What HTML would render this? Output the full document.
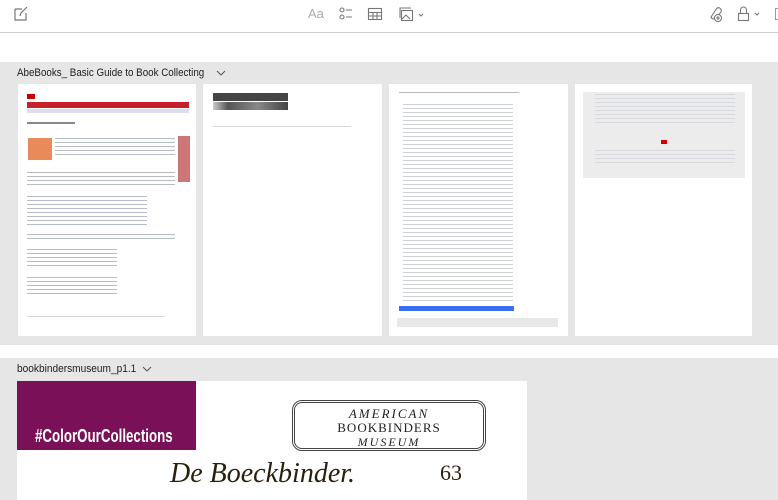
<!DOCTYPE html>
<html><head><meta charset="utf-8"><style>
*{margin:0;padding:0;box-sizing:border-box}
body{width:778px;height:500px;overflow:hidden;background:#fff;font-family:"Liberation Sans",sans-serif;position:relative}
.a{position:absolute}
.pg{position:absolute;top:84px;height:252px;background:#fff}
.ln{position:absolute;height:1px;background:#d8d8de}
.t{position:absolute;background:repeating-linear-gradient(#b8bcc8 0 1px,transparent 1px 4px)}
.cond{transform-origin:0 0;white-space:nowrap}
</style></head><body>
<div class="a" style="left:0;top:32px;width:778px;height:1px;background:#d0d0d0"></div>
<svg class="a" style="left:13px;top:6px" width="16" height="16" viewBox="0 0 16 16" fill="none" stroke="#777" stroke-width="1.2"><path d="M2 3h7M2 3v11h11V7"/><path d="M7 10l1-3 6-6"/></svg>
<div class="a" style="left:308px;top:6px;font-size:13px;color:#aaa">Aa</div>
<svg class="a" style="left:338px;top:6px" width="16" height="16" viewBox="0 0 16 16" fill="none" stroke="#777" stroke-width="1.1"><circle cx="4" cy="4" r="2"/><circle cx="4" cy="11" r="2"/><path d="M8 4h6M8 11h6"/></svg>
<svg class="a" style="left:367px;top:6px" width="16" height="16" viewBox="0 0 16 16" fill="none" stroke="#777" stroke-width="1.1"><rect x="1.5" y="2.5" width="13" height="11"/><path d="M1.5 6.5h13M1.5 10h13M6 6.5v7M10 6.5v7"/></svg>
<svg class="a" style="left:399px;top:6px" width="28" height="16" viewBox="0 0 28 16" fill="none" stroke="#777" stroke-width="1.1"><rect x="2.5" y="4.5" width="11" height="10"/><path d="M1 12V2h11"/><path d="M3 13l4-4 4 4"/><path d="M20 8l2 2 2-2"/></svg>
<svg class="a" style="left:706px;top:5px" width="18" height="18" viewBox="0 0 18 18" fill="none" stroke="#777" stroke-width="1.1"><path d="M5 12L11 3a3 3 0 0 1 4 4l-5 6a3 3 0 0 1-5-1z"/><circle cx="12" cy="13" r="3.5" fill="#fff"/><path d="M12 11v4M10 13h4"/></svg>
<svg class="a" style="left:736px;top:5px" width="28" height="18" viewBox="0 0 28 18" fill="none" stroke="#777" stroke-width="1.1"><rect x="2.5" y="8.5" width="10" height="7"/><path d="M4.5 8.5V5a3 3 0 0 1 6 0v3.5"/><path d="M19 8l2 2 2-2"/></svg>
<div class="a" style="left:775px;top:8px;width:3px;height:12px;border:1px solid #999;border-right:none"></div>

<div class="a" style="left:0;top:62px;width:778px;height:283px;background:#e6e6e6"></div>
<div class="a cond" style="left:17px;top:67px;font-size:11px;color:#222;transform:scaleX(0.89)">AbeBooks_ Basic Guide to Book Collecting</div>
<svg class="a" style="left:216px;top:70px" width="10" height="7" viewBox="0 0 10 7" fill="none" stroke="#555"><path d="M1 1l4 4 4-4"/></svg>
<div class="pg" style="left:18px;width:178px">
 <div class="a" style="left:9px;top:10px;width:8px;height:5px;background:#c00"></div>
 <div class="a" style="left:9px;top:18px;width:162px;height:6px;background:#c8202a"></div>
 <div class="a" style="left:9px;top:25px;width:162px;height:4px;background:#dde"></div>
 <div class="a" style="left:9px;top:38px;width:48px;height:2px;background:#888"></div>
 <div class="a" style="left:10px;top:54px;width:24px;height:22px;background:#e88a5a"></div>
 <div class="a" style="left:160px;top:52px;width:12px;height:46px;background:#c77"></div>
 <div class="t" style="left:37px;top:54px;width:120px;height:20px"></div>
 <div class="t" style="left:9px;top:88px;width:148px;height:16px"></div>
 <div class="t" style="left:9px;top:112px;width:120px;height:30px"></div>
 <div class="t" style="left:9px;top:150px;width:148px;height:8px"></div>
 <div class="t" style="left:9px;top:165px;width:90px;height:20px"></div>
 <div class="t" style="left:9px;top:193px;width:90px;height:20px"></div>
 <div class="ln" style="left:9px;top:232px;width:138px"></div>
</div>
<div class="pg" style="left:203px;width:179px">
 <div class="a" style="left:10px;top:9px;width:75px;height:8px;background:#444"></div>
 <div class="a" style="left:10px;top:18px;width:75px;height:8px;background:linear-gradient(90deg,#ccc,#555 20%,#888,#444)"></div>
 <div class="ln" style="left:10px;top:42px;width:138px"></div>
</div>
<div class="pg" style="left:389px;width:179px">
 <div class="t" style="left:10px;top:8px;width:120px;height:3px"></div>
 <div class="t" style="left:14px;top:20px;width:110px;height:198px;opacity:.7"></div>
 <div class="a" style="left:10px;top:222px;width:115px;height:5px;background:#3b6ff0"></div>
 <div class="a" style="left:8px;top:234px;width:161px;height:9px;background:#e8e8e8"></div>
</div>
<div class="pg" style="left:575px;width:177px">
 <div class="a" style="left:8px;top:8px;width:162px;height:86px;background:#ececec"></div>
 <div class="t" style="left:20px;top:10px;width:140px;height:30px;opacity:.4"></div>
 <div class="a" style="left:86px;top:56px;width:6px;height:4px;background:#c00"></div>
 <div class="t" style="left:20px;top:66px;width:140px;height:16px;opacity:.4"></div>
</div>

<div class="a" style="left:0;top:358px;width:778px;height:142px;background:#e6e6e6"></div>
<div class="a cond" style="left:17px;top:363px;font-size:11px;color:#222;transform:scaleX(0.92)">bookbindersmuseum_p1.1</div>
<svg class="a" style="left:142px;top:366px" width="10" height="7" viewBox="0 0 10 7" fill="none" stroke="#555"><path d="M1 1l4 4 4-4"/></svg>
<div class="a" style="left:17px;top:381px;width:510px;height:119px;background:#fff"></div>
<div class="a" style="left:17px;top:381px;width:179px;height:69px;background:#7a1057"></div>
<div class="a cond" style="left:35px;top:426px;font-size:18px;font-weight:bold;color:#fff;transform:scaleX(0.74)">#ColorOurCollections</div>
<div class="a" style="left:292px;top:400px;width:194px;height:51px;border:3px double #444;border-radius:10px;text-align:center;font-family:'Liberation Serif',serif;color:#222;line-height:14px;padding-top:4px">
 <div style="font-style:italic;font-size:13px;letter-spacing:2px">AMERICAN</div>
 <div style="font-size:13px;letter-spacing:1px">BOOKBINDERS</div>
 <div style="font-style:italic;font-size:12px;letter-spacing:2px">MUSEUM</div>
</div>
<div class="a" style="left:170px;top:458px;font-family:'Liberation Serif',serif;font-style:italic;font-size:28px;color:#2a2010">De Boeckbinder.</div>
<div class="a" style="left:440px;top:460px;font-family:'Liberation Serif',serif;font-size:22px;color:#2a2010">63</div>
</body></html>
